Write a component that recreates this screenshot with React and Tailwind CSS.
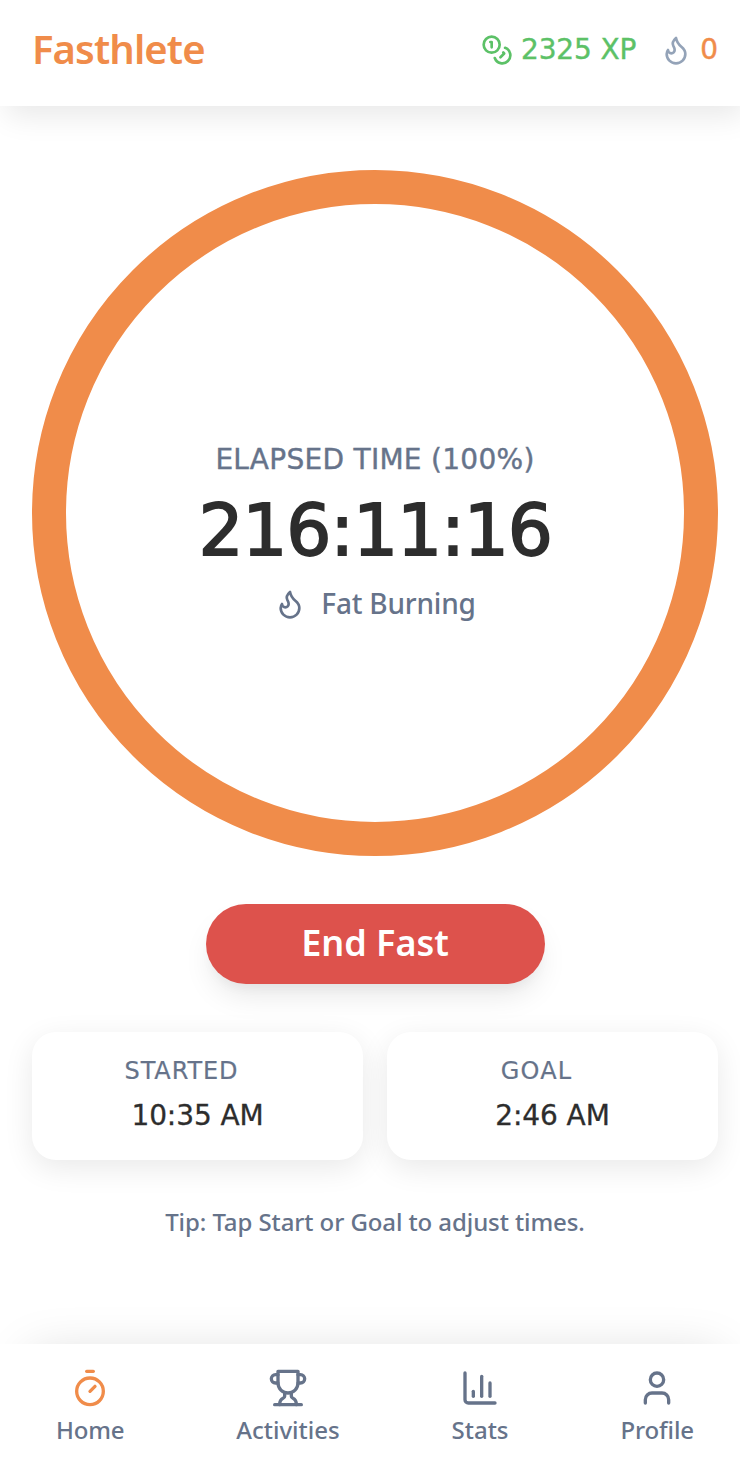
import React from "react";

function Icon({ className, children }) {
  return (
    <svg
      viewBox="0 0 24 24"
      fill="none"
      stroke="currentColor"
      strokeWidth="2"
      strokeLinecap="round"
      strokeLinejoin="round"
      className={"shrink-0 " + className}
      aria-hidden="true"
    >
      {children}
    </svg>
  );
}

const Flame = ({ className }) => (
  <Icon className={className}>
    <path d="M8.5 14.5A2.5 2.5 0 0 0 11 12c0-1.38-.5-2-1-3-1.072-2.143-.224-4.054 2-6 .5 2.5 2 4.9 4 6.5 2 1.6 3 3.5 3 5.5a7 7 0 1 1-14 0c0-1.153.433-2.294 1-3a2.5 2.5 0 0 0 2.5 2.5z" />
  </Icon>
);

const Coins = ({ className }) => (
  <Icon className={className}>
    <circle cx="8" cy="8" r="6" />
    <path d="M18.09 10.37A6 6 0 1 1 10.34 18" />
    <path d="M7 6h1v4" />
    <path d="m16.71 13.88.7.71-2.82 2.82" />
  </Icon>
);

const tabs = [
  {
    label: "Home",
    color: "text-[#f08c4a]",
    tracking: "tracking-[-0.2px]",
    icon: (
      <>
        <line x1="10" x2="14" y1="2" y2="2" />
        <line x1="12" x2="15" y1="14" y2="11" />
        <circle cx="12" cy="14" r="8" />
      </>
    ),
  },
  {
    label: "Activities",
    color: "text-[#66738a]",
    tracking: "tracking-[0px]",
    icon: (
      <>
        <path d="M6 9H4.5a2.5 2.5 0 0 1 0-5H6" />
        <path d="M18 9h1.5a2.5 2.5 0 0 0 0-5H18" />
        <path d="M4 22h16" />
        <path d="M10 14.66V17c0 .55-.47.98-.97 1.21C7.85 18.75 7 20.24 7 22" />
        <path d="M14 14.66V17c0 .55.47.98.97 1.21C16.15 18.75 17 20.24 17 22" />
        <path d="M18 2H6v7a6 6 0 0 0 12 0V2Z" />
      </>
    ),
  },
  {
    label: "Stats",
    color: "text-[#66738a]",
    tracking: "tracking-[0px]",
    icon: (
      <>
        <path d="M3 3v16a2 2 0 0 0 2 2h16" />
        <path d="M18 17V9" />
        <path d="M13 17V5" />
        <path d="M8 17v-3" />
      </>
    ),
  },
  {
    label: "Profile",
    color: "text-[#66738a]",
    tracking: "tracking-[-0.1px]",
    icon: (
      <>
        <path d="M19 21v-2a4 4 0 0 0-4-4H9a4 4 0 0 0-4 4v2" />
        <circle cx="12" cy="7" r="4" />
      </>
    ),
  },
];

function TimeCard({ label, time, tracking }) {
  return (
    <div className="flex h-32 flex-1 flex-col items-center rounded-[24px] bg-white pt-[23px] font-['DejaVu_Sans',sans-serif] shadow-[0_8px_30px_rgba(0,0,0,0.09)]">
      <div className={"pr-8 text-[24px] leading-8 text-[#66738a] [-webkit-text-stroke:0.2px] " + tracking}>
        {label}
      </div>
      <div className="mt-[11px] text-[28px] leading-9 tracking-[-0.1px] text-[#2d2d2d] [-webkit-text-stroke:0.3px]">
        {time}
      </div>
    </div>
  );
}

export default function App() {
  return (
    <div className="h-[1472px] w-full overflow-hidden bg-white font-['Noto_Sans',sans-serif]">
      <div className="flex h-full w-[750px] flex-col">
        <header className="flex h-[106px] shrink-0 items-start justify-between bg-white px-8 pt-[18px] shadow-[0_16px_28px_-6px_rgba(0,0,0,0.09)]">
          <h1 className="pt-px text-[40px] leading-[60px] font-semibold tracking-[-0.9px] text-[#f08c4a]">
            Fasthlete
          </h1>
          <div className="flex h-16 items-center font-['DejaVu_Sans',sans-serif] text-[28px] leading-10 [-webkit-text-stroke:0.4px]">
            <div className="flex items-center text-[#5cc167]">
              <Coins className="size-8" />
              <span className="ml-2 tracking-[-0.15px]">2325 XP</span>
            </div>
            <div className="ml-6 flex items-center">
              <Flame className="size-8 text-[#94a3b8]" />
              <span className="ml-2 text-[#f08c4a]">0</span>
            </div>
          </div>
        </header>

        <main className="flex flex-1 flex-col items-center px-8 pt-16">
          <div className="flex size-[686px] shrink-0 flex-col items-center rounded-full border-[34px] border-[#f08c4a] pt-[236px]">
            <div className="font-['DejaVu_Sans',sans-serif] text-[28px] leading-10 tracking-[0.28px] text-[#66738a] [-webkit-text-stroke:0.4px]">
              ELAPSED TIME (100%)
            </div>
            <div className="mt-[15px] font-['DejaVu_Sans',sans-serif] text-[71px] leading-[72px] tracking-[-1.2px] text-[#2d2d2d] [-webkit-text-stroke:1.8px]">
              216:11:16
            </div>
            <div className="mt-[21px] flex h-8 items-center text-[#66738a]">
              <Flame className="size-8" />
              <span className="mb-0.5 ml-[15px] text-[28px] leading-8 font-medium tracking-[-0.2px]">
                Fat Burning
              </span>
            </div>
          </div>

          <button className="mt-12 flex h-20 w-[339px] shrink-0 items-center justify-center rounded-full bg-[#dd524c] pb-0.5 text-[36px] leading-10 font-semibold text-white shadow-[0_16px_30px_-6px_rgba(0,0,0,0.1),0_8px_12px_-4px_rgba(0,0,0,0.04)]">
            End Fast
          </button>

          <div className="mt-12 flex w-full gap-6">
            <TimeCard label="STARTED" time="10:35 AM" tracking="tracking-[0.9px]" />
            <TimeCard label="GOAL" time="2:46 AM" tracking="tracking-[1.1px]" />
          </div>

          <p className="mt-[46px] text-[24px] leading-8 font-medium tracking-[-0.09px] text-[#66738a]">
            Tip: Tap Start or Goal to adjust times.
          </p>
        </main>

        <nav className="flex h-32 shrink-0 items-start justify-between bg-white px-14 pt-6 shadow-[0_-20px_50px_-30px_rgba(0,0,0,0.15)]">
          {tabs.map((t) => (
            <div key={t.label} className="flex flex-col items-center">
              <Icon className={"size-10 " + t.color}>{t.icon}</Icon>
              <span className={"mt-1.5 text-[24px] leading-8 font-medium text-[#66738a] " + t.tracking}>
                {t.label}
              </span>
            </div>
          ))}
        </nav>
      </div>
    </div>
  );
}
